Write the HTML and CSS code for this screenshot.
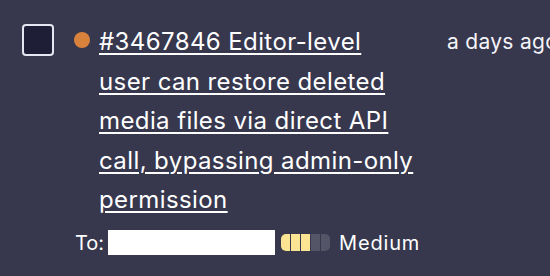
FILE: index.html
```html
<!DOCTYPE html>
<html>
<head>
<meta charset="utf-8">
<link rel="stylesheet" href="styles.css">
</head>
<body>
<div class="item">
  <div class="top">
    <div class="checkbox"></div>
    <div class="dot"></div>
    <a class="title" href="#">#3467846 Editor-level user can restore deleted media files via direct API call, bypassing admin-only permission</a>
    <div class="date">a days ago</div>
  </div>
  <div class="meta">
    <span class="to">To:</span>
    <span class="redact"></span>
    <span class="bars">
      <span class="seg on first"></span><span class="seg on"></span><span class="seg on"></span><span class="seg"></span><span class="seg last"></span>
    </span>
    <span class="sev">Medium</span>
  </div>
</div>
</body>
</html>
```
FILE: styles.css
```css
html, body {
  margin: 0;
  padding: 0;
  background: #37374e;
  width: 550px;
  height: 276px;
  overflow: hidden;
}
body {
  font-family: Inter, "Noto Sans", sans-serif;
  color: #ffffff;
}
.item {
  padding: 22px 0 0 22px;
}
.top {
  display: flex;
  align-items: flex-start;
}
.checkbox {
  width: 28px;
  height: 28px;
  border: 2px solid #e6e6f2;
  border-radius: 4px;
  background: #1e1f36;
  margin-top: 2px;
  flex: none;
}
.dot {
  width: 16px;
  height: 16px;
  border-radius: 50%;
  background: #d9823b;
  margin: 10px 9px 0 20px;
  flex: none;
}
.title {
  width: 316px;
  flex: none;
  font-size: 24px;
  letter-spacing: 0.4px;
  line-height: 39.5px;
  color: #ffffff;
  text-decoration: underline;
  text-underline-offset: 3px;
  text-decoration-thickness: 2px;
}
.date {
  margin-left: 32px;
  font-size: 21px;
  letter-spacing: 0.3px;
  line-height: 39.5px;
  white-space: nowrap;
  color: #f4f4f8;
}
.meta {
  display: flex;
  align-items: center;
  margin-top: 10.5px;
  padding-left: 53px;
  height: 25px;
}
.to {
  font-size: 20px;
  margin-right: 4px;
}
.redact {
  width: 167px;
  height: 25px;
  background: #ffffff;
}
.bars {
  display: flex;
  gap: 1px;
  margin-left: 6px;
  height: 17px;
}
.seg {
  width: 9px;
  height: 17px;
  background: #555568;
}
.seg.on {
  background: #fce592;
}
.seg.first {
  border-radius: 5px 0 0 5px;
}
.seg.last {
  border-radius: 0 5px 5px 0;
}
.sev {
  margin-left: 9px;
  font-size: 20px;
  letter-spacing: 0.8px;
}
```
